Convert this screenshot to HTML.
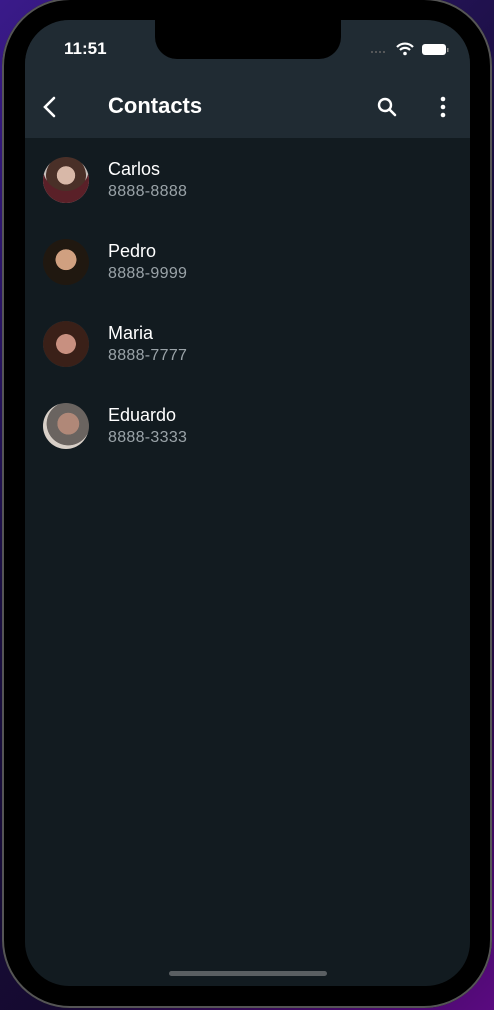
<!DOCTYPE html>
<html><head><meta charset="utf-8"><style>
html,body{margin:0;padding:0;width:494px;height:1010px;overflow:hidden;background:linear-gradient(135deg,#3a1a8a,#1a0f40 40%,#150a30 70%,#5a0a80);font-family:"Liberation Sans",sans-serif}
.phone{position:absolute;left:2px;top:-2px;width:490px;height:1010px;border-radius:68px;background:#000;box-shadow:0 0 0 2px #555 inset}
.screen{position:absolute;left:25px;top:20px;width:445px;height:966px;border-radius:44px;background:#121b20;overflow:hidden}
.hdr{position:absolute;left:0;top:0;width:445px;height:118px;background:#202b33}
.notch{position:absolute;left:130px;top:0;width:186px;height:39px;background:#000;border-radius:0 0 22px 22px}
.time{position:absolute;left:39px;top:19px;color:#fff;font-size:17px;font-weight:bold}
.title{position:absolute;left:83px;top:73px;color:#fff;font-size:22px;font-weight:bold}
.row{position:absolute;left:0;width:445px;height:82px}
.av{position:absolute;left:18px;top:14px;width:46px;height:46px;border-radius:50%}
.nm{position:absolute;left:83px;top:16px;color:#fff;font-size:18px}
.ph{position:absolute;left:83px;top:40px;color:#9aa3a8;font-size:16px;letter-spacing:.3px}
.bar{position:absolute;left:144px;top:951px;width:158px;height:5px;border-radius:3px;background:#5a5f62}
</style></head><body>
<div class="phone"></div>
<div class="screen">
<div class="hdr"></div>
<div class="notch"></div>
<div class="time">11:51</div>
<svg style="position:absolute;left:345px;top:22px" width="80" height="14" viewBox="0 0 80 14">
<g fill="#666"><circle cx="2" cy="10" r="1"/><circle cx="6" cy="10" r="1"/><circle cx="10" cy="10" r="1"/><circle cx="14" cy="10" r="1"/></g>
<path d="M27 5 A11 11 0 0 1 43 5" stroke="#fff" stroke-width="2.2" fill="none"/>
<path d="M30 8 A7 7 0 0 1 40 8" stroke="#fff" stroke-width="2.2" fill="none"/>
<circle cx="35" cy="11.5" r="1.8" fill="#fff"/>
<rect x="52" y="2" width="24" height="11" rx="3" fill="#fff"/><rect x="77" y="6" width="1.5" height="4" fill="#888"/>
</svg>
<svg style="position:absolute;left:15px;top:75px" width="22" height="24" viewBox="0 0 22 24"><path d="M14 3 L5 12 L14 21" stroke="#fff" stroke-width="2.6" fill="none" stroke-linecap="round"/></svg>
<div class="title">Contacts</div>
<svg style="position:absolute;left:350px;top:75px" width="24" height="24" viewBox="0 0 24 24"><circle cx="10" cy="10" r="6" stroke="#fff" stroke-width="2.4" fill="none"/><path d="M14.5 14.5 L20 20" stroke="#fff" stroke-width="2.6" stroke-linecap="round"/></svg>
<svg style="position:absolute;left:412px;top:75px" width="12" height="24" viewBox="0 0 12 24"><g fill="#fff"><circle cx="6" cy="4" r="2.3"/><circle cx="6" cy="12" r="2.3"/><circle cx="6" cy="20" r="2.3"/></g></svg>
<div class="row" style="top:123px"><div class="av" style="background:radial-gradient(circle at 50% 40%,#d8b8a8 0 25%,#4a3028 26% 55%,#c8c0bc 56%);box-shadow:inset 0 -12px 0 #5a2028"></div><div class="nm">Carlos</div><div class="ph">8888-8888</div></div>
<div class="row" style="top:205px"><div class="av" style="background:radial-gradient(circle at 50% 45%,#d0a080 0 30%,#201810 31%);"></div><div class="nm">Pedro</div><div class="ph">8888-9999</div></div>
<div class="row" style="top:287px"><div class="av" style="background:radial-gradient(circle at 50% 50%,#c89080 0 30%,#3a2018 31% 70%,#404448 71%);"></div><div class="nm">Maria</div><div class="ph">8888-7777</div></div>
<div class="row" style="top:369px"><div class="av" style="background:radial-gradient(circle at 55% 45%,#b08878 0 30%,#6a6460 31% 60%,#d8d0c8 61%);"></div><div class="nm">Eduardo</div><div class="ph">8888-3333</div></div>
<div class="bar"></div>
</div>
</body></html>
